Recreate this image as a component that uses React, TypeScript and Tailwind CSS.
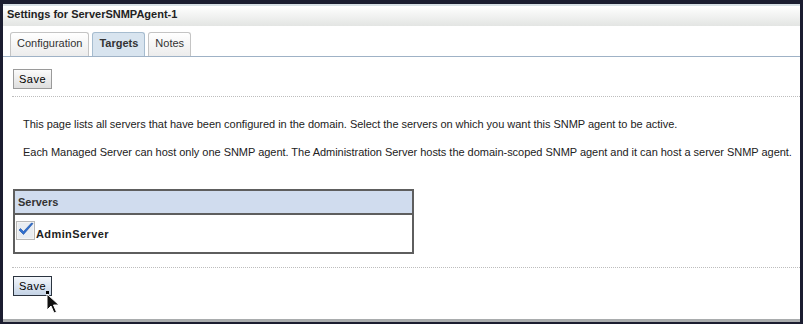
import React from "react";

const font = { fontFamily: '"Liberation Sans", Arial, sans-serif' };

const tabs = [
  { name: "Configuration", active: false },
  { name: "Targets", active: true },
  { name: "Notes", active: false },
];

const SaveButton = ({ hover }: { hover?: boolean }) => (
  <button
    className={
      "h-[20px] w-[39px] border text-[11px] leading-none text-black tracking-[0.5px] " +
      (hover
        ? "border-[#2b3440] bg-gradient-to-b from-[#f4f7fb] to-[#c4d3e6]"
        : "border-[#9a9a9a] bg-gradient-to-b from-[#fbfbfb] to-[#dedede]")
    }
  >
    Save
  </button>
);

const Checkbox = () => (
  <svg width="19" height="19" viewBox="0 0 19 19">
    <rect x="0.5" y="0.5" width="18" height="18" fill="#f4f4f4" stroke="#b8b8b8" />
    <rect x="2" y="2" width="15" height="15" fill="#e9edf2" />
    <path d="M3 9 L7.5 13.5 L17 2.5 L15.5 2 L7.5 10.5 L4.5 7.5 Z" fill="#2f6fd0" stroke="#1d4fa0" strokeWidth="0.6" />
  </svg>
);

export default function App() {
  return (
    <div style={font} className="w-[803px] h-[324px] bg-[#1b1d30] pt-[4px] pl-[3px] pr-[3px] overflow-hidden">
      <div className="relative h-[318px] bg-white border-b-[3px] border-[#a9acad]">
        {/* title bar */}
        <div className="h-[22px] border-t-2 border-[#d6dfe4] bg-gradient-to-b from-white to-[#e3e5e3] pl-[4px] pb-[3px] flex items-center">
          <span className="text-[11px] font-bold text-[#222]">Settings for ServerSNMPAgent-1</span>
        </div>

        {/* tabs */}
        <div className="flex items-end gap-[3px] pl-[7px] pt-[6px] border-b border-[#9fb2c6] h-[31px]">
          {tabs.map((t) => (
            <div
              key={t.name}
              className={
                "h-[24px] px-[6px] pb-[2px] flex items-center text-[11px] border border-b-0 rounded-t-[3px] " +
                (t.active
                  ? "bg-[#d8e4ef] border-[#a6bccf] font-bold text-[#333]"
                  : "bg-gradient-to-b from-white to-[#ececec] border-[#c4c4c4] text-[#333]")
              }
            >
              {t.name}
            </div>
          ))}
        </div>

        <div className="flex pl-[10px] pt-[12px]">
          <SaveButton />
        </div>
        <div className="ml-[9px] mt-[7px] border-t border-dotted border-[#bdbdbd]" />

        <div className="pl-[20px] pt-[19px] text-[11px] leading-[16px] tracking-[-0.03px] text-[#222] flex flex-col gap-[12px]">
          <p>This page lists all servers that have been configured in the domain. Select the servers on which you want this SNMP agent to be active.</p>
          <p>Each Managed Server can host only one SNMP agent. The Administration Server hosts the domain-scoped SNMP agent and it can host a server SNMP agent.</p>
        </div>

        <div className="ml-[10px] mt-[29px] w-[401px] border-2 border-[#5e5e5e]">
          <div className="h-[24px] bg-[#d0dcee] border-b-2 border-[#5e5e5e] flex items-center pl-[3px] text-[11px] font-bold text-[#333]">
            Servers
          </div>
          <div className="h-[37px] flex items-start pt-[6px] pl-[1px] gap-[1px]">
            <Checkbox />
            <span className="text-[11px] font-bold text-[#222] mt-[5px] tracking-[0.4px]">AdminServer</span>
          </div>
        </div>

        <div className="ml-[9px] mt-[13px] border-t border-dotted border-[#bdbdbd]" />
        <div className="flex pl-[10px] pt-[8px]">
          <SaveButton hover />
        </div>

        {/* mouse cursor */}
        <div className="absolute left-[43px] top-[287px] w-[3px] h-[3px] bg-black" />
        <svg className="absolute left-[43px] top-[289px]" width="14" height="22" viewBox="0 0 14 22">
          <path d="M1 1 L1 17 L5 13 L8 20 L10.5 19 L7.5 12 L13 12 Z" fill="#111" stroke="#fff" strokeWidth="1" />
        </svg>
      </div>
    </div>
  );
}
